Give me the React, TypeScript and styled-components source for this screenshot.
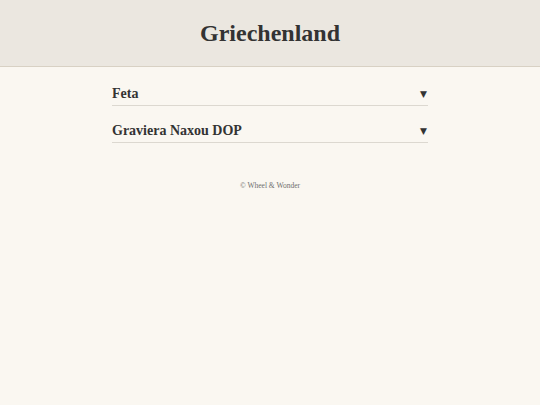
import styled, {createGlobalStyle} from "styled-components";

const GlobalStyle = createGlobalStyle`
  html, body {
    margin: 0;
    padding: 0;
    background: #faf7f1;
    font-family: "Liberation Serif", "DejaVu Serif", serif;
    color: #333;
  }
`;

const items = ["Feta", "Graviera Naxou DOP"];

export default function App() {
  return (
    <>
      <GlobalStyle />
      <S.Header>
        <S.Title>Griechenland</S.Title>
      </S.Header>
      <S.Main>
        {items.map((name) => (
          <S.Item key={name}>
            <S.ItemName>{name}</S.ItemName>
            <S.Arrow>▼</S.Arrow>
          </S.Item>
        ))}
      </S.Main>
      <S.Footer>© Wheel &amp; Wonder</S.Footer>
    </>
  );
}

const S = {
  Header: styled.header`
    height: 66px;
    background: #ebe7e0;
    border-bottom: 1px solid #d8d1c4;
    display: flex;
    align-items: center;
    justify-content: center;
  `,
  Title: styled.h1`
    margin: 0;
    font-size: 24px;
    font-weight: bold;
    color: #333;
  `,
  Main: styled.main`
    width: 316px;
    margin: 0 auto;
    padding-top: 13px;
    display: flex;
    flex-direction: column;
    gap: 11px;
  `,
  Item: styled.div`
    display: flex;
    align-items: center;
    justify-content: space-between;
    height: 26px;
    padding-top: 3px;
    box-sizing: border-box;
    border-bottom: 1px solid #dcd8d0;
  `,
  ItemName: styled.span`
    font-size: 14px;
    font-weight: bold;
    color: #333;
  `,
  Arrow: styled.span`
    font-family: "DejaVu Sans", sans-serif;
    font-size: 9px;
    color: #333;
    margin-right: 1px;
  `,
  Footer: styled.footer`
    margin-top: 38px;
    text-align: center;
    font-size: 7.5px;
    color: #6f6f6f;
  `,
};
